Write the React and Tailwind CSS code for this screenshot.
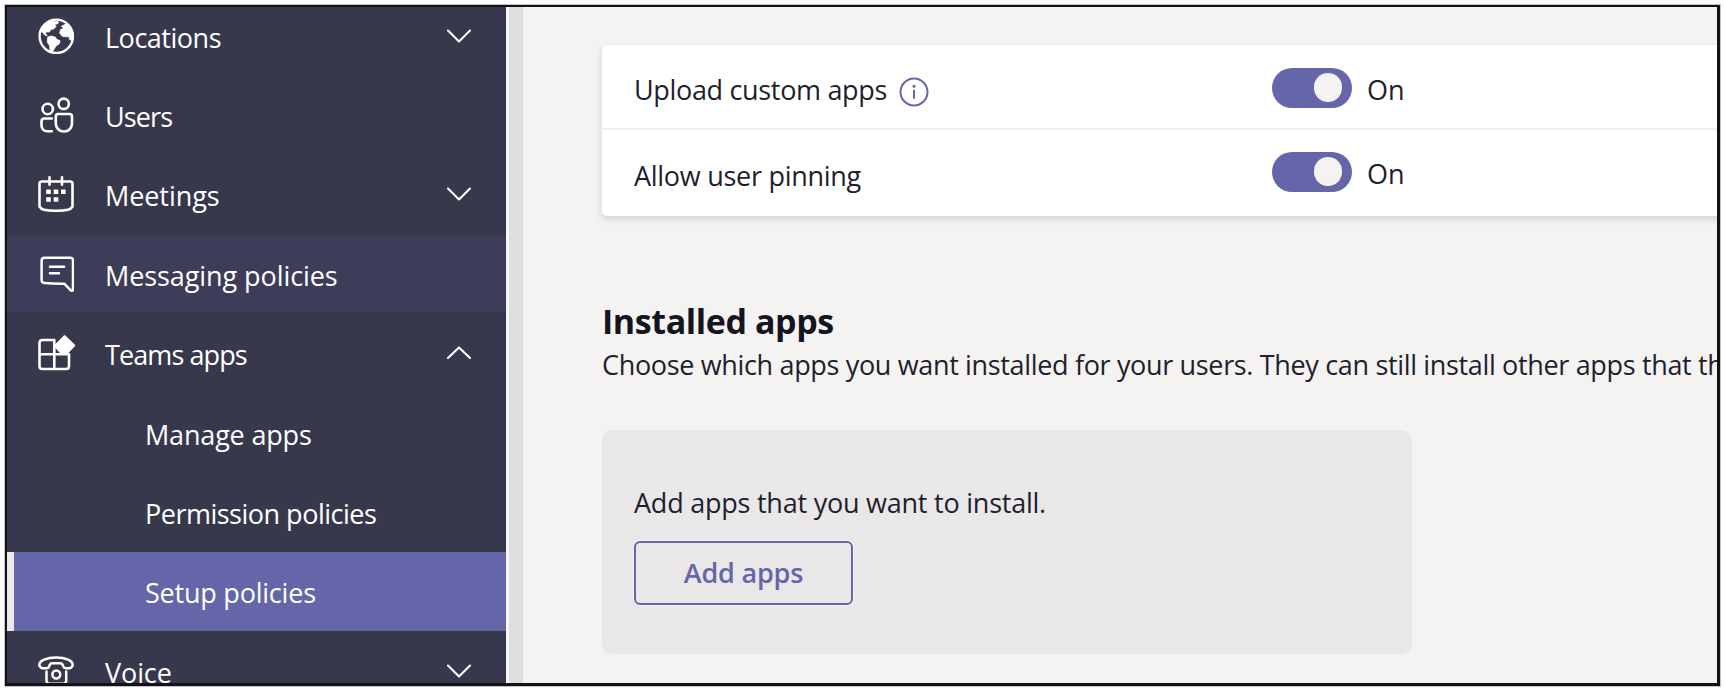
const stroke = { fill: "none", stroke: "currentColor", strokeLinecap: "round", strokeLinejoin: "round" };

function GlobeIcon() {
  return (
    <svg className="size-9 shrink-0" viewBox="0 0 36 36" {...stroke} strokeWidth="2.3">
      <circle cx="18.3" cy="18.3" r="16.7" />
      <path fill="currentColor" strokeWidth="0.8" d="M3.5 11 8 5.500l6-2.600 6.500.8-.6 2-3.400.8 1.600 2-2.600 2.600-2.600.4-1.600 2.600-2.800-.4-1 1.400 1.600 2.600-2.400-.6-2.200-3-2.600-.4z" />
      <path fill="currentColor" strokeWidth="0.8" d="m10 19 3.400-.9 4.200 1.200 1 2 3.400 1.400-.6 3-3.400 2.200-1.400 2.600-2.400 3.400-2-.2-.6-6-2.200-3.400z" />
      <path fill="currentColor" strokeWidth="0.8" d="m23.600 8.200 3-1.400 1.400-2 5 6.400 1.600 6.600-.8 4-2 .2-1-3.400-3 .2-3.600-.6-2.600-3.200 1-3.400 3.200-1.400z" />
    </svg>
  );
}

function UsersIcon() {
  return (
    <svg className="size-9 shrink-0" viewBox="0 0 36 36" {...stroke} strokeWidth="2.6">
      <circle cx="9.7" cy="12" r="5.200" />
      <circle cx="25.700" cy="6.800" r="5.200" />
      <path d="M13.800 21.500H6.200c-1.700 0-2.700 1-2.700 2.700v4.100c0 3.600 2.300 6 5.800 6h4.500" />
      <path d="M20 17h11.500c1.500 0 2.500 1 2.500 2.500v7c0 4.600-3.300 8-8 8s-8.200-3.400-8.200-8v-7c0-1.500.7-2.500 2.200-2.500z" />
    </svg>
  );
}

function CalendarIcon() {
  return (
    <svg className="size-9 shrink-0" viewBox="0 0 36 36" {...stroke} strokeWidth="2.6">
      <path d="M3.700 5.500h28.600c1.300 0 2.200.9 2.200 2.200v22.800c-1 1.700-2.400 2.700-4.500 3.200-8 1.400-16 1.400-24 0-2.100-.5-3.500-1.500-4.500-3.200V7.700c0-1.300.9-2.200 2.200-2.200zM11.500 1.300v7.500M24 1.300v7.500" />
      <path fill="currentColor" stroke="none" d="M8.200 13.500h4.600v4.600H8.200zM15.700 13.500h4.600v4.600h-4.600zM23 13.500h4.600v4.600H23zM8.200 21.200h4.600v4.600H8.200zM15.700 21.200h4.600v4.600h-4.600z" />
    </svg>
  );
}

function MessageIcon() {
  return (
    <svg className="size-9 shrink-0" viewBox="0 0 36 36" {...stroke} strokeWidth="2.5">
      <path d="M6.500 1.700h25.800c1.700 0 2.700 1.100 2.700 2.800v28.800c0 1.500-1.500 2-2.500.9l-6.300-6.500c-7.500.1-14-.2-19.800-.8-1.700-.2-2.800-1.200-2.800-2.900V4.700c0-1.900 1.200-3 2.900-3z" />
      <path d="M12 10.800h14M12 17.300h9" />
    </svg>
  );
}

function AppsIcon() {
  return (
    <svg className="h-9 w-[38px] shrink-0" viewBox="0 0 38 36" {...stroke} strokeWidth="2.600">
      <path d="M16 5H4.500C2.600 5 1.500 6.100 1.500 8v23c0 1.900 1.100 3 3 3H28c1.900 0 3-1.100 3-3V19.300M16.300 5v29M1.500 19.300H31" />
      <path fill="currentColor" strokeWidth="2.200" d="m26.600 1.200 9.500 9.300-8.200 8.400h-3.600L17 11z" />
    </svg>
  );
}

function PhoneIcon() {
  return (
    <svg className="size-9 shrink-0" viewBox="0 0 36 36" {...stroke} strokeWidth="2.500">
      <path d="M1.300 11.800C1.300 7.800 8.500 4.500 18.200 4.500s16.500 3.300 16.500 7.300c0 1.500-1.600 3.400-3.600 3.400h-3.600c-1 0-1.800-.8-2.200-1.800l-.7-1.700c-.4-1-1.200-1.500-2.200-1.500h-8.400c-1 0-1.800.5-2.200 1.500l-.7 1.700c-.4 1-1.200 1.800-2.200 1.800H4.900c-2 0-3.600-1.900-3.600-3.400z" />
      <path d="M8.500 18.500v9c0 2 1.200 3.200 3.200 3.200h13.300c2 0 3.200-1.200 3.200-3.200v-9" />
      <circle cx="18.300" cy="21.500" r="3.900" />
    </svg>
  );
}

function Chevron({ up }) {
  return (
    <svg className="h-4 w-[26px] shrink-0" viewBox="0 0 26 16" {...stroke} strokeWidth="2.100">
      <path d={up ? "M2 13 13 2.500 24 13" : "M2 2.500 13 13.500 24 2.500"} />
    </svg>
  );
}

const items = [
  { label: "Locations", icon: GlobeIcon, chevron: "down", track: "tracking-[-0.48px]" },
  { label: "Users", icon: UsersIcon, track: "tracking-[-0.9px]" },
  { label: "Meetings", icon: CalendarIcon, chevron: "down", track: "tracking-[-0.08px]" },
  { label: "Messaging policies", icon: MessageIcon, hover: true, track: "tracking-[-0.08px]" },
  { label: "Teams apps", icon: AppsIcon, chevron: "up", track: "tracking-[-0.9px]" },
  { label: "Manage apps", track: "tracking-[-0.18px]" },
  { label: "Permission policies", track: "tracking-[-0.5px]" },
  { label: "Setup policies", selected: true, track: "tracking-[-0.22px]" },
  { label: "Voice", icon: PhoneIcon, chevron: "down", track: "tracking-[-0.1px]" },
];

function NavItem({ item }) {
  const Icon = item.icon;
  const bg = item.selected ? "bg-[#6566a9]" : item.hover ? "border-y-2 border-transparent bg-clip-padding bg-[#3d3d59]" : "";
  return (
    <li className={`flex h-[79.4px] shrink-0 items-center pr-[34px] ${bg}`}>
      {item.selected && <span className="h-full w-[7px] shrink-0 bg-[#ebe9ea]" />}
      {Icon ? (
        <span className="ml-[31px] flex w-[67px] shrink-0">
          <Icon />
        </span>
      ) : (
        <span className={item.selected ? "w-[131px]" : "w-[138px]"} />
      )}
      <span className={`grow pt-[4px] text-[27px] leading-9 whitespace-nowrap ${item.track}`}>{item.label}</span>
      {item.chevron && <Chevron up={item.chevron === "up"} />}
    </li>
  );
}

function Toggle() {
  return (
    <button className="flex h-10 w-20 shrink-0 items-center justify-end rounded-full bg-[#6566a9] pr-[10px]" role="switch" aria-checked="true">
      <span className="h-[29px] w-[28px] rounded-full bg-[#f4f3f2]" />
    </button>
  );
}

function InfoIcon() {
  return (
    <svg className="ml-[12px] mt-[5px] size-[30px]" viewBox="0 0 30 30" {...stroke} stroke="#6566a9" strokeWidth="2">
      <circle cx="15" cy="15" r="13.500" />
      <path d="M15 13.500v7.500" />
      <circle cx="15" cy="9.300" r="1.500" fill="#6566a9" stroke="none" />
    </svg>
  );
}

export default function App() {
  return (
    <div className="h-[691px] w-full overflow-hidden bg-white pt-[5px] pl-[5px] font-['Open_Sans','Noto_Sans',sans-serif] text-[#1f1e2c]">
      <div className="flex h-[681px] w-[1715px] overflow-hidden border-t-2 border-r-[3px] border-b-[3px] border-l-2 border-[#121219] shadow-[0_0_0_1px_#c4c3c9]">
        <nav className="w-[499px] shrink-0 overflow-hidden bg-[#38384d] text-white">
          <ul className="-mt-[11px] flex flex-col">
            {items.map((item) => (
              <NavItem key={item.label} item={item} />
            ))}
          </ul>
        </nav>
        <div className="w-[17px] shrink-0 border-l-[3px] border-[#f8f8f8] bg-[#dedde0]" />

        <main className="min-w-0 grow overflow-hidden bg-[#f4f3f2] pt-[38px] pl-[79px]">
          <section className="h-[171px] w-[1160px] rounded-[5px] bg-white shadow-[0_3px_6px_1px_rgba(60,55,70,0.14)]">
            <div className="flex h-[85px] items-center border-b-2 border-[#f2f1f2] pt-[2px] pl-[32px]">
              <div className="flex w-[638px] items-center pt-[4px]">
                <span className="text-[27px] leading-9 tracking-[-0.33px]">Upload custom apps</span>
                <InfoIcon />
              </div>
              <Toggle />
              <span className="pt-[4px] pl-[15px] text-[27px] leading-9">On</span>
            </div>
            <div className="flex h-[86px] items-center pl-[32px]">
              <span className="w-[638px] pt-[6px] text-[27px] leading-9 tracking-[-0.28px]">Allow user pinning</span>
              <div className="flex items-center pb-[3px]">
                <Toggle />
                <span className="pt-[5px] pl-[15px] text-[27px] leading-9">On</span>
              </div>
            </div>
          </section>

          <h2 className="mt-[83px] text-[34px] leading-[44px] font-bold tracking-[-0.4px] text-[#151520]">Installed apps</h2>
          <p className="mt-[4px] text-[27px] leading-9 tracking-[-0.34px] whitespace-nowrap">
            Choose which apps you want installed for your users. They can still install other apps that they
          </p>

          <section className="mt-[47px] flex h-[224px] w-[810px] flex-col items-start rounded-[10px] bg-[#e9e7e8] pt-[55px] pl-[32px]">
            <p className="text-[27px] leading-9 tracking-[-0.23px]">Add apps that you want to install.</p>
            <button className="mt-[20px] h-[64px] w-[219px] rounded-[6px] border-2 border-[#6566a9] text-[27px] leading-9 font-semibold tracking-[-0.19px] text-[#6566a9] shadow-[0_0_0_1px_#f5f4f5]">
              Add apps
            </button>
          </section>
        </main>
      </div>
    </div>
  );
}
